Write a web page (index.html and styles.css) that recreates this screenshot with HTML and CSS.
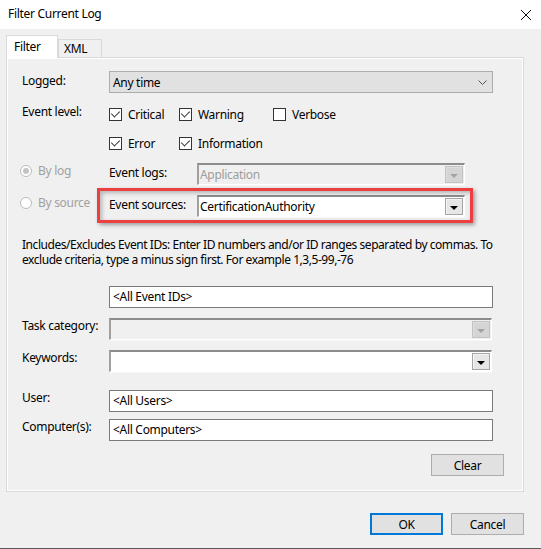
FILE: index.html
```html
<!DOCTYPE html>
<html>
<head>
<meta charset="utf-8">
<link rel="stylesheet" href="styles.css">
</head>
<body>
<div class="window">
  <div class="titlebar">
    <span class="title">Filter Current Log</span>
    <svg class="close" width="12" height="12" viewBox="0 0 12 12"><path d="M1 1 L11 11 M11 1 L1 11" stroke="#111" stroke-width="1"/></svg>
  </div>
  <div class="content">
    <div class="tabs">
      <div class="tab active">Filter</div>
      <div class="tab">XML</div>
    </div>
    <div class="panel">
      <div class="row r-logged">
        <span class="label">Logged:</span>
        <div class="select-modern"><span>Any time</span>
          <svg width="9" height="5" viewBox="0 0 9 5"><path d="M0.5 0.5 L4.5 4.5 L8.5 0.5" fill="none" stroke="#555" stroke-width="1"/></svg>
        </div>
      </div>
      <div class="row r-cb1">
        <span class="label">Event level:</span>
        <label class="cb w70"><span class="box checked"></span>Critical</label>
        <label class="cb w94"><span class="box checked"></span>Warning</label>
        <label class="cb"><span class="box"></span>Verbose</label>
      </div>
      <div class="row r-cb2">
        <span class="label"></span>
        <label class="cb w70"><span class="box checked"></span>Error</label>
        <label class="cb"><span class="box checked"></span>Information</label>
      </div>
      <div class="row r-src1">
        <span class="radio-item"><span class="radio on"></span>By log</span>
        <span class="label2">Event logs:</span>
        <div class="combo disabled"><span>Application</span><span class="btn"><span class="arrow"></span></span></div>
      </div>
      <div class="row r-src2">
        <span class="radio-item"><span class="radio"></span>By source</span>
        <span class="label2">Event sources:</span>
        <div class="combo"><span>CertificationAuthority</span><span class="btn"><span class="arrow"></span></span></div>
        <div class="highlight"></div>
      </div>
      <p class="desc">Includes/Excludes Event IDs: Enter ID numbers and/or ID ranges separated by commas. To exclude criteria, type a minus sign first. For example 1,3,5-99,-76</p>
      <div class="row r-ids">
        <span class="label"></span>
        <div class="input">&lt;All Event IDs&gt;</div>
      </div>
      <div class="row r-task">
        <span class="label">Task category:</span>
        <div class="combo disabled wide"><span></span><span class="btn"><span class="arrow"></span></span></div>
      </div>
      <div class="row r-kw">
        <span class="label">Keywords:</span>
        <div class="combo wide"><span></span><span class="btn"><span class="arrow"></span></span></div>
      </div>
      <div class="row r-user">
        <span class="label">User:</span>
        <div class="input">&lt;All Users&gt;</div>
      </div>
      <div class="row r-comp">
        <span class="label">Computer(s):</span>
        <div class="input">&lt;All Computers&gt;</div>
      </div>
      <div class="row r-clear">
        <button class="button">Clear</button>
      </div>
    </div>
    <div class="footer">
      <button class="button default">OK</button>
      <button class="button">Cancel</button>
    </div>
  </div>
</div>
</body>
</html>
```
FILE: styles.css
```css
* { box-sizing: border-box; }
html, body { margin: 0; padding: 0; }
body {
  font-family: "Noto Sans", "Open Sans", sans-serif;
  font-size: 12px;
  letter-spacing: -0.3px;
  color: #000;
  background: #f0f0f0;
}
.window {
  width: 541px;
  height: 549px;
  background: #f0f0f0;
  border-bottom: 1px solid #5a5a5a;
  display: flex;
  flex-direction: column;
}
.titlebar {
  height: 29px;
  background: #fff;
  display: flex;
  align-items: center;
  justify-content: space-between;
  padding: 0 9px 2px 8px;
}
.title { font-size: 12px; }
.close { display: block; margin-top: 2px; }
.content {
  padding: 6px 17px 0 6px;
}
.tabs {
  display: flex;
  align-items: flex-end;
  height: 22px;
  position: relative;
  z-index: 1;
}
.tab {
  border: 1px solid #d9d9d9;
  border-bottom: none;
  background: #f0f0f0;
  height: 18px;
  padding: 0 0 0 5px;
  width: 44px;
  line-height: 17px;
}
.tab.active {
  background: #fff;
  height: 23px;
  width: 52px;
  padding-left: 7px;
  margin-bottom: -1px;
  line-height: 21px;
}
.panel {
  border: 1px solid #d9d9d9;
  box-shadow: inset 0 0 0 1px #fff;
  width: 518px;
  height: 435px;
  padding: 0 30px 0 15px;
  display: flex;
  flex-direction: column;
}
.row {
  display: flex;
  align-items: flex-start;
  position: relative;
}
.label {
  width: 87px;
  flex: none;
  line-height: 15px;
  padding-top: 0;
}
.r-logged { margin-top: 13px; }
.r-logged .label { padding-top: 2px; }
.r-cb1 { margin-top: 13px; height: 16px; align-items: center; }
.r-cb2 { margin-top: 13px; height: 16px; align-items: center; }
.r-cb1 .label { margin-top: -6px; }
.r-src1 { margin-top: 12px; }
.r-src2 { margin-top: 10px; }
.desc { margin: 20px 0 0 0; line-height: 15px; width: 478px; letter-spacing: -0.45px; }
.r-ids { margin-top: 19px; }
.r-task { margin-top: 10px; }
.r-kw { margin-top: 10px; }
.r-user { margin-top: 18px; }
.r-comp { margin-top: 7px; }
.r-clear { margin-top: 13px; justify-content: flex-end; margin-right: -11px; }

.select-modern {
  width: 384px;
  height: 22px;
  background: #e1e1e1;
  border: 1px solid #adadad;
  display: flex;
  align-items: center;
  justify-content: space-between;
  padding: 0 5px 0 3px;
}
.select-modern svg { display: block; }

.cb { display: flex; align-items: center; flex: none; }
.w70 { width: 70px; }
.w94 { width: 94px; }
.box {
  width: 13px; height: 13px;
  border: 1px solid #333;
  background: #fff;
  margin-right: 6px;
  position: relative;
  flex: none;
}
.box.checked::after {
  content: "";
  position: absolute;
  left: 3px; top: 0px;
  width: 4px; height: 7px;
  border: solid #333;
  border-width: 0 1px 1px 0;
  transform: rotate(45deg);
}

.radio-item {
  width: 89px;
  height: 15px;
  flex: none;
  margin-left: -2px;
  color: #a0a0a0;
  display: flex;
  align-items: center;
  line-height: 15px;
  margin-top: 0;
}
.radio {
  width: 12px; height: 12px;
  border-radius: 50%;
  border: 1px solid #bcbcbc;
  background: #fff;
  margin-right: 6px;
  position: relative;
  flex: none;
}
.radio.on::after {
  content: "";
  position: absolute;
  left: 2px; top: 2px;
  width: 6px; height: 6px;
  border-radius: 50%;
  background: #c4c4c4;
}
.label2 { width: 88px; flex: none; padding-top: 2px; line-height: 15px; }

.combo {
  width: 268px;
  height: 22px;
  background: #fff;
  border-style: solid;
  border-width: 2px 1px 1px 2px;
  border-color: #8c8c8c #fff #fff #a0a0a0;
  box-shadow: 0 1px 0 #f7f7f7;
  display: flex;
  align-items: center;
  justify-content: space-between;
  padding: 0 1px 0 1px;
}
.combo.wide { width: 383px; }
.combo.disabled { background: #f0f0f0; color: #9d9d9d; }
.btn {
  width: 18px; height: 17px;
  border: 1px solid #a5a5a5;
  background: #e6e6e6;
  box-shadow: inset 1px 1px 0 #f4f4f4;
  display: flex;
  align-items: center;
  justify-content: center;
  flex: none;
}
.arrow {
  width: 0; height: 0;
  border-left: 4px solid transparent;
  border-right: 4px solid transparent;
  border-top: 4px solid #000;
  margin-top: 2px;
}
.combo.disabled .btn { border-color: #c2c2c2; background: #d5d5d5; box-shadow: inset 1px 1px 0 #dedede; }
.combo.disabled .arrow { border-top-color: #a3a3a3; }

.highlight {
  position: absolute;
  left: 75px;
  top: -7px;
  width: 376px;
  height: 35px;
  border: 3px solid #ec4040;
  box-shadow: 2px 2px 4px rgba(0,0,0,0.35), inset 2px 2px 4px rgba(0,0,0,0.25);
  pointer-events: none;
}

.input {
  width: 384px;
  height: 22px;
  background: #fff;
  border: 1px solid #7a7a7a;
  padding: 1px 3px 0 3px;
}

.button {
  font-family: inherit;
  font-size: 12px;
  letter-spacing: -0.3px;
  height: 22px;
  width: 73px;
  background: #e1e1e1;
  border: 1px solid #adadad;
  padding: 0;
  color: #000;
}
.button.default { border: 2px solid #0078d7; }
.footer {
  display: flex;
  justify-content: flex-end;
  gap: 8px;
  margin-top: 21px;
}
```
